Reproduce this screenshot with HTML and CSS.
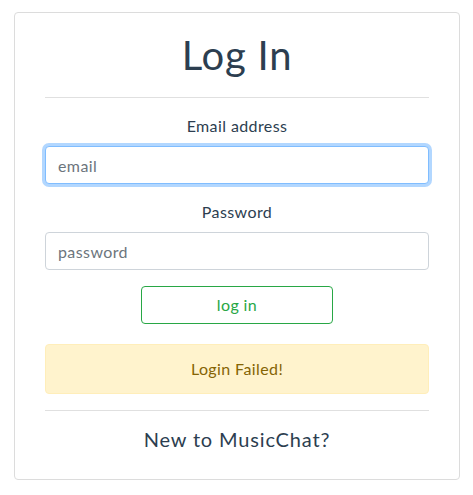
FILE: index.html
```html
<!DOCTYPE html>
<html lang="en">
<head>
<meta charset="utf-8">
<title>Log In</title>
<link rel="stylesheet" href="styles.css">
</head>
<body>
<div class="page">
  <div class="card">
    <h1 class="title">Log In</h1>
    <hr class="rule">
    <form class="form">
      <div class="group">
        <label class="label" for="email">Email address</label>
        <input class="control control-focus" id="email" type="email" placeholder="email">
      </div>
      <div class="group">
        <label class="label" for="password">Password</label>
        <input class="control" id="password" type="password" placeholder="password">
      </div>
      <button class="btn" type="button">log in</button>
    </form>
    <div class="alert">Login Failed!</div>
    <hr class="rule">
    <h5 class="footer">New to MusicChat?</h5>
  </div>
</div>
</body>
</html>
```

FILE: styles.css
```css
* { box-sizing: border-box; }
html, body { margin: 0; padding: 0; background: #fff; }
body {
  font-family: "Lato", "Open Sans", "Liberation Sans", sans-serif;
  font-size: 16px;
  line-height: 1.5;
  color: #2c3e50;
  text-align: center;
  letter-spacing: 0.4px;
}
.page { padding: 12px 13px 0 14px; }
.card {
  width: 446px;
  border: 1px solid #dcdcdc;
  border-radius: 4px;
  padding: 20px 30px 20px 30px;
}
.title {
  margin: 0 0 20px;
  font-size: 40px;
  font-weight: 400;
  line-height: 44px;
  letter-spacing: 0.8px;
}
.rule {
  margin: 16px 0;
  border: 0;
  border-top: 1px solid rgba(0,0,0,0.12);
  height: 0;
}
.form { display: flex; flex-direction: column; align-items: center; margin-bottom: 20px; }
.group { width: 100%; margin-bottom: 16px; display: flex; flex-direction: column; }
.label { display: block; margin-bottom: 8px; line-height: 24px; }
.control {
  display: block;
  width: 100%;
  height: 38px;
  padding: 6px 12px;
  font: inherit;
  font-size: 16px;
  letter-spacing: 0.4px;
  color: #495057;
  background: #fff;
  border: 1px solid #ced4da;
  border-radius: 4px;
  outline: none;
}
.control::placeholder { color: #6c757d; opacity: 1; }
.control-focus {
  border-color: #80bdff;
  box-shadow: 0 0 0 3px rgba(0,123,255,0.3);
}
.btn {
  width: 192px;
  height: 38px;
  font: inherit;
  font-size: 16px;
  letter-spacing: 0.4px;
  color: #28a745;
  background: #fff;
  border: 1px solid #28a745;
  border-radius: 4px;
  padding: 0;
}
.alert {
  padding: 12px 20px;
  background: #fff3cd;
  border: 1px solid #ffeeba;
  border-radius: 4px;
  color: #856404;
  line-height: 24px;
}
.footer {
  margin: 0 0 8px;
  font-size: 20px;
  font-weight: 400;
  line-height: 1.2;
  letter-spacing: 0.85px;
}
```
